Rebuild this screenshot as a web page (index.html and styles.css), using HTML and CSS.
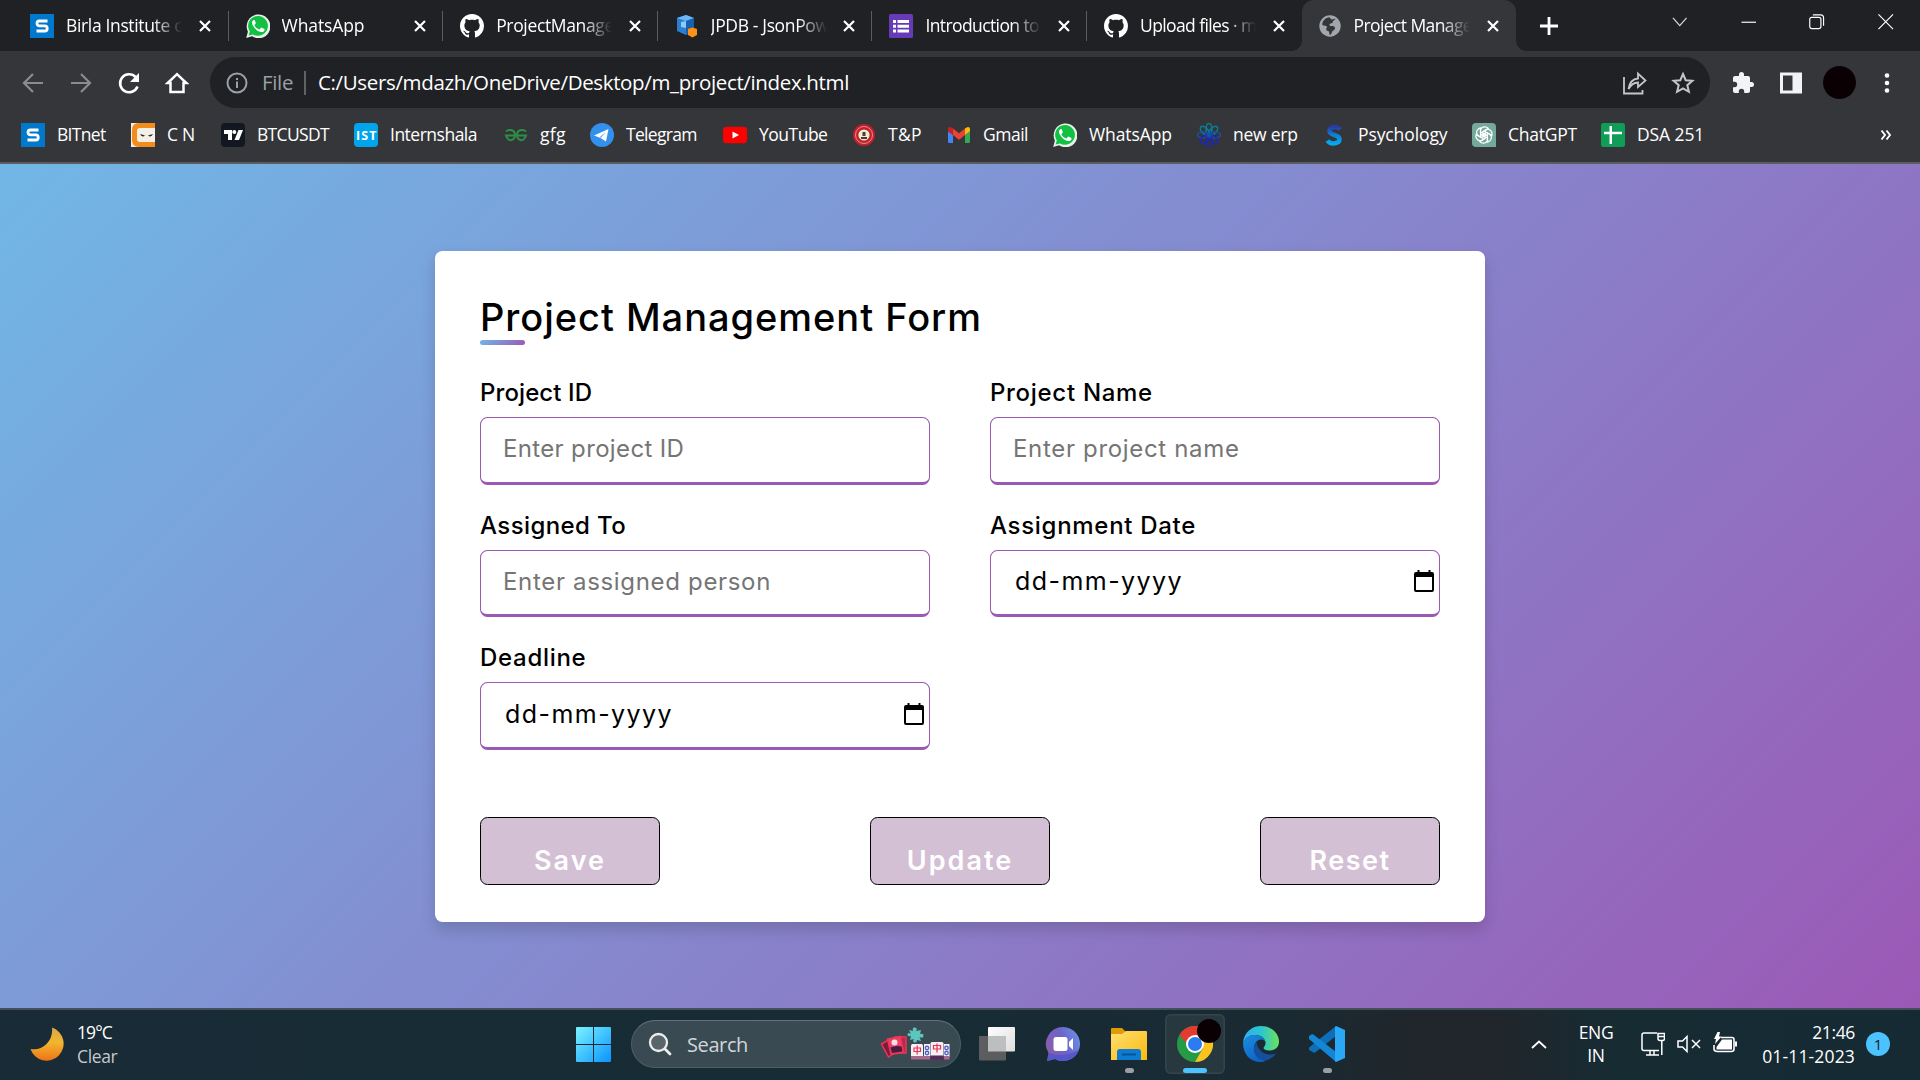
FILE: index.html
```html
<!DOCTYPE html>
<html lang="en">
<head>
<meta charset="utf-8">
<title>Project Management Form</title>
<link rel="stylesheet" href="styles.css">
</head>
<body>
<svg class="defs" aria-hidden="true">
  <defs>
    <symbol id="close" viewBox="0 0 12 12"><path d="M1 1l10 10M11 1L1 11" stroke="#fff" stroke-width="2.2" fill="none"/></symbol>
    <symbol id="bit" viewBox="0 0 24 24"><path fill="#0079cc" d="M0 0h24v24H0z"/><path d="M17.5 7H9.2Q7 7 7 9.3T9.2 11.8h5.6q2.4 0 2.4 2.6T14.8 17H6.5" fill="none" stroke="#fff" stroke-width="2.8"/></symbol>
    <symbol id="github" viewBox="0 0 16 16"><path fill="#fff" d="M8 0C3.58 0 0 3.58 0 8c0 3.54 2.29 6.53 5.47 7.59.4.07.55-.17.55-.38 0-.19-.01-.82-.01-1.49-2.01.37-2.53-.49-2.69-.94-.09-.23-.48-.94-.82-1.13-.28-.15-.68-.52-.01-.53.63-.01 1.08.58 1.23.82.72 1.21 1.87.87 2.33.66.07-.52.28-.87.51-1.07-1.78-.2-3.64-.89-3.64-3.95 0-.87.31-1.59.82-2.15-.08-.2-.36-1.02.08-2.12 0 0 .67-.21 2.2.82.64-.18 1.32-.27 2-.27s1.36.09 2 .27c1.53-1.04 2.2-.82 2.2-.82.44 1.1.16 1.92.08 2.12.51.56.82 1.27.82 2.15 0 3.07-1.87 3.75-3.65 3.95.29.25.54.73.54 1.48 0 1.07-.01 1.93-.01 2.2 0 .21.15.46.55.38A8.01 8.01 0 0 0 16 8c0-4.42-3.58-8-8-8z"/></symbol>
    <symbol id="whatsapp" viewBox="0 0 24 24"><path fill="#e8f2ea" d="M.2 24l1.7-6.3A11.9 11.9 0 1 1 6 22.3z"/><path fill="#12c143" d="M2.6 21.5l1.2-4.1A9.9 9.9 0 1 1 7 20.4z"/><path fill="#fff" d="M8.9 6.6c-.3-.6-.5-.6-1-.6-.7 0-1.900.9-1.900 2.700 0 1.700 1.300 3.500 1.500 3.800s2.600 4.100 6.400 5.300c3 1 4.300-.7 4.500-1.300.2-.7.2-1.300 0-1.500l-2.700-1.300c-.3-.1-.6-.2-.9.200l-1.100 1.400c-.3.300-.5.200-.9 0-2.200-1-3.300-2.100-4.300-3.800-.2-.4 0-.6.200-.8l1-1.300c.1-.3.100-.4 0-.7z"/></symbol>
    <symbol id="calendar" viewBox="0 0 20 22"><path fill-rule="evenodd" d="M3.500 0h2v2h9V0h2v2H18q2 0 2 2v16q0 2-2 2H2q-2 0-2-2V4q0-2 2-2h1.500zM2 7v13h16V7z"/></symbol>
  </defs>
</svg>

<header class="browser">
  <div class="tabstrip">
    <div class="tab first"><svg class="fav"><use href="#bit"/></svg><span class="tab-title">Birla Institute of</span><svg class="x"><use href="#close"/></svg></div>
    <div class="tab"><svg class="fav"><use href="#whatsapp"/></svg><span class="tab-title whole">WhatsApp</span><svg class="x"><use href="#close"/></svg></div>
    <div class="tab"><svg class="fav"><use href="#github"/></svg><span class="tab-title">ProjectManage</span><svg class="x"><use href="#close"/></svg></div>
    <div class="tab"><svg class="fav" viewBox="0 0 24 24"><path fill="#2b7fd0" d="M2 4l9-3 8 3v13l-8 4-9-4z"/><path fill="#69b7f5" d="M2 4l9-3 8 3-8 3z"/><path fill="#1a5fae" d="M11 7l8-3v13l-8 4z"/><path fill="#8cc9fa" d="M6 8l5-1v7l-5-1z"/><path fill="#ff9114" d="M13 15l4.500-1.500L22 15v6l-4.500 2.500L13 21z"/></svg><span class="tab-title">JPDB - JsonPow</span><svg class="x"><use href="#close"/></svg></div>
    <div class="tab"><svg class="fav" viewBox="0 0 24 24"><rect width="24" height="24" rx="1.500" fill="#673ab7"/><path fill="#fff" d="M4 6h3v3H4zm4.500 0H20v3H8.500zM4 10.700h3v3H4zm4.500 0H20v3H8.500zM4 15.400h3v3H4zm4.500 0H20v3H8.500z"/></svg><span class="tab-title tight">Introduction to</span><svg class="x"><use href="#close"/></svg></div>
    <div class="tab last"><svg class="fav"><use href="#github"/></svg><span class="tab-title tight">Upload files · m</span><svg class="x"><use href="#close"/></svg></div>
    <div class="tab active"><svg class="fav" viewBox="0 0 24 24"><circle cx="12" cy="12" r="10.700" fill="#a2a7ad"/><path fill="#35363a" d="M11 3.200c1.800.3 1.300 2.200 3.300 2.300 1.200 0 2.200-.9 3.200-.6-1 1.300-2.600 1.500-2.700 3-.1 1.700-2.300 1-3.100 2-.8 1.200.300 2.100 1.700 2.100 2.300 0 3.800.5 3.600 2.600-.2 1.700-2.100 1.800-2.800 3-.6 1.200-.4 2.700-2.200 3.300-1.200-.6-.3-2.600-1.300-3.600-.8-.9-2.300-.5-2.500-1.900-.1-1.300 1-1.700.7-2.600-.5-1.200-2.800-.9-4.500-1.700C4 7.500 6.600 4 11 3.200z"/></svg><span class="tab-title tight">Project Manage</span><svg class="x"><use href="#close"/></svg></div>
    <svg class="plus" viewBox="0 0 18 18"><path d="M9 0v18M0 9h18" stroke="#fff" stroke-width="2.800"/></svg>
    <div class="winctl">
      <svg viewBox="0 0 18 18"><path d="M2 5l7 8 7-8" fill="none" stroke="#ddd" stroke-width="1.200"/></svg>
      <svg viewBox="0 0 18 18"><path d="M1.500 9.500h15" stroke="#fff" stroke-width="1.200"/></svg>
      <svg viewBox="0 0 18 18"><rect x="1.800" y="4.500" width="11.500" height="11.500" rx="2" fill="none" stroke="#fff" stroke-width="1.200"/><path d="M5 2h8q3 0 3 3v8" fill="none" stroke="#fff" stroke-width="1.200"/></svg>
      <svg viewBox="0 0 18 18"><path d="M1.500 1.500l15 15m0-15l-15 15" stroke="#fff" stroke-width="1.200"/></svg>
    </div>
  </div>

  <div class="toolbar">
    <div class="nav">
      <svg viewBox="0 0 24 24"><path d="M22 12H3M12 3l-9 9 9 9" fill="none" stroke="#8b8c8f" stroke-width="2.200"/></svg>
      <svg viewBox="0 0 24 24"><path d="M2 12h19M12 3l9 9-9 9" fill="none" stroke="#8b8c8f" stroke-width="2.200"/></svg>
      <svg viewBox="0 0 24 24"><path d="M20.500 15.500A9 9 0 1 1 18.600 6" fill="none" stroke="#fff" stroke-width="2.600"/><path d="M22 2v9h-9z" fill="#fff"/></svg>
      <svg viewBox="0 0 24 24"><path d="M5.500 21V12H2.700L12 3.200l9.300 8.800h-2.800v9z" fill="none" stroke="#fff" stroke-width="2.500"/></svg>
    </div>
    <div class="omnibox">
      <svg class="info" viewBox="0 0 24 24"><circle cx="12" cy="12" r="9.500" fill="none" stroke="#9aa0a6" stroke-width="2"/><path d="M11 10.500h2V17h-2zM11 7h2v2.100h-2z" fill="#9aa0a6"/></svg>
      <span class="scheme">File</span><i class="bar"></i>
      <span class="url">C:/Users/mdazh/OneDrive/Desktop/m_project/index.html</span>
      <svg class="share" viewBox="0 0 24 24"><path d="M1 6v16.500h18.500V19" fill="none" stroke="#c4c6c9" stroke-width="1.800"/><path d="M5.500 18C6.500 11.500 9.500 8 15 7.500V2.500L22.500 9.500 15 16v-4.500c-4 0-7 2-9.500 6.500z" fill="none" stroke="#c4c6c9" stroke-width="1.800"/></svg>
      <svg viewBox="0 0 24 24"><path d="M12 3l2.700 6.200 6.700.6-5.100 4.400 1.600 6.600L12 17.300l-5.900 3.500 1.600-6.600-5.100-4.400 6.700-.6z" fill="none" stroke="#c4c6c9" stroke-width="2"/></svg>
    </div>
    <div class="actions">
      <svg viewBox="0 0 24 24"><path fill="#f1f3f4" d="M20.500 11H19V7c0-1.100-.9-2-2-2h-4V3.500a2.500 2.500 0 0 0-5 0V5H4c-1.100 0-2 .9-2 2v3.800h1.500a2.700 2.700 0 0 1 0 5.400H2V20c0 1.100.9 2 2 2h3.800v-1.500a2.700 2.700 0 0 1 5.400 0V22H17c1.100 0 2-.9 2-2v-4h1.500a2.500 2.500 0 0 0 0-5z"/></svg>
      <svg viewBox="0 0 24 24"><path fill="#f1f3f4" fill-rule="evenodd" d="M1 1.500h22v21H1zM4 4.500v15h9.500v-15z"/></svg>
      <i class="avatar"></i>
      <svg viewBox="0 0 24 24"><g fill="#fff"><circle cx="12" cy="4.500" r="2.300"/><circle cx="12" cy="12" r="2.300"/><circle cx="12" cy="19.500" r="2.300"/></g></svg>
    </div>
  </div>

  <nav class="bookmarks">
    <a><svg><use href="#bit"/></svg><span>BITnet</span></a>
    <a><svg viewBox="0 0 24 24"><path fill="#f6efe6" d="M0 0h24v24H0z"/><path fill="#f28c1c" d="M24 0v5H9q-3 0-3 3v8q0 3 3 3h15v5H8q-7 0-7-7V7q0-7 7-7z"/><path fill="#222" d="M9 11l5 1.500q-3 2.500-5-1.500zm13 0l-5 1.500q3 2.500 5-1.500z"/></svg><span>C N</span></a>
    <a><svg viewBox="0 0 24 24"><rect width="24" height="24" rx="4" fill="#131722"/><path fill="#fff" d="M3 7h8v10H7v-6H3z"/><circle cx="13.300" cy="9" r="2" fill="#fff"/><path fill="#fff" d="M17.500 7H22l-4 10h-4.500z"/></svg><span>BTCUSDT</span></a>
    <a><svg viewBox="0 0 24 24"><rect width="24" height="24" rx="4" fill="#00a5ec"/><text x="12" y="16.500" text-anchor="middle" font-family="Open Sans, sans-serif" font-size="12.500" font-weight="700" fill="#fff" textLength="20">IST</text></svg><span>Internshala</span></a>
    <a><svg viewBox="0 0 24 24"><path d="M2 8.500q2-2 5-1.500 4 1 4 5t-3.500 5T2 12.500h9M22 8.500q-2-2-5-1.500-4 1-4 5t3.500 5 5.500-4.500h-9" fill="none" stroke="#2f8d46" stroke-width="2"/></svg><span>gfg</span></a>
    <a><svg viewBox="0 0 24 24"><circle cx="12" cy="12" r="12" fill="#3390ec"/><path fill="#fff" d="M4 12.500L18.500 6 16 18.500l-5.500-3.500z"/><path fill="#3390ec" d="M9.500 14.500L16 8.500l-5 6z"/></svg><span>Telegram</span></a>
    <a><svg viewBox="0 0 24 24"><rect y="3.700" width="24" height="16.600" rx="3.500" fill="#f00"/><path fill="#fff" d="M9.500 8.400v7.200L16 12z"/></svg><span>YouTube</span></a>
    <a><svg viewBox="0 0 24 24"><circle cx="12" cy="12" r="11" fill="#c21f2b"/><circle cx="12" cy="12" r="8.500" fill="none" stroke="#e38d92" stroke-width="1"/><circle cx="12" cy="12" r="5.600" fill="#f3ead5"/><path fill="#4c3c2a" d="M9 14h6v2H9zm1.500-5h3v4h-3z"/></svg><span>T&amp;P</span></a>
    <a><svg viewBox="0 0 24 24"><path fill="#4285f4" d="M1 8l5 4v8H2.500Q1 20 1 18.500z"/><path fill="#34a853" d="M23 8l-5 4v8h3.500q1.500 0 1.500-1.500z"/><path fill="#ea4335" d="M6 5.500l6 4.700 6-4.700V12l-6 4.700L6 12z"/><path fill="#c5221f" d="M1 6q0-2 2-2 1.200 0 3 1.500V12L1 8.200z"/><path fill="#fbbc04" d="M23 6q0-2-2-2-1.200 0-3 1.500V12l5-3.800z"/></svg><span>Gmail</span></a>
    <a><svg><use href="#whatsapp"/></svg><span>WhatsApp</span></a>
    <a><svg viewBox="0 0 24 24"><g fill="none" stroke-width="1.600"><g stroke="#087d93"><ellipse cx="12" cy="6" rx="3" ry="5.500"/><ellipse cx="12" cy="6" rx="3" ry="5.500" transform="rotate(45 12 12)"/><ellipse cx="12" cy="6" rx="3" ry="5.500" transform="rotate(-45 12 12)"/></g><g stroke="#1a4fa8"><ellipse cx="12" cy="6" rx="3" ry="5.500" transform="rotate(90 12 12)"/><ellipse cx="12" cy="6" rx="3" ry="5.500" transform="rotate(-90 12 12)"/></g><g stroke="#1d27b5"><ellipse cx="12" cy="6" rx="3" ry="5.500" transform="rotate(135 12 12)"/><ellipse cx="12" cy="6" rx="3" ry="5.500" transform="rotate(180 12 12)"/><ellipse cx="12" cy="6" rx="3" ry="5.500" transform="rotate(225 12 12)"/></g></g><circle cx="12" cy="12" r="2.500" fill="#1a4fa8"/></svg><span>new erp</span></a>
    <a><svg viewBox="0 0 24 24"><defs><linearGradient id="psy" x2="0" y2="1"><stop stop-color="#2b3aa5"/><stop offset=".5" stop-color="#0b82d8"/><stop offset="1" stop-color="#04a9ef"/></linearGradient></defs><path d="M18 6.500Q16.500 4 13 4 7.500 4 7.500 8c0 5 10 3 10 8 0 5-9 6-12 1.500" fill="none" stroke="url(#psy)" stroke-width="4.500"/></svg><span>Psychology</span></a>
    <a><svg viewBox="0 0 24 24"><path fill="#75a99c" d="M4 0h16q4 0 4 4v20H4q-4 0-4-4V4q0-4 4-4z"/><g fill="none" stroke="#fff" stroke-width="1.200"><path id="lobe" d="M8.600 14V7.500Q9 3.800 12.800 3.800q2 0 3.500 1.500L11 8.600v5.600"/><use href="#lobe" transform="rotate(60 12 12)"/><use href="#lobe" transform="rotate(120 12 12)"/><use href="#lobe" transform="rotate(180 12 12)"/><use href="#lobe" transform="rotate(240 12 12)"/><use href="#lobe" transform="rotate(300 12 12)"/></g></svg><span>ChatGPT</span></a>
    <a><svg viewBox="0 0 24 24"><rect width="24" height="24" rx="2.500" fill="#0f9d58"/><path fill="#fff" d="M8.500 3H11v5.700h10v2.600H11V21H8.500v-9.700H3V8.700h5.500z"/></svg><span>DSA 251</span></a>
    <svg class="more" viewBox="0 0 12 12"><path d="M1.500 1.500L5 6l-3.500 4.500M6.500 1.500L10 6l-3.500 4.500" fill="none" stroke="#fff" stroke-width="1.900"/></svg>
  </nav>
</header>

<main class="page">
  <form class="card">
    <h1 class="title">Project Management Form</h1>
    <div class="fields">
      <label class="field"><span class="lbl id">Project ID</span><span class="input hint snug">Enter project ID</span></label>
      <label class="field"><span class="lbl">Project Name</span><span class="input hint">Enter project name</span></label>
      <label class="field"><span class="lbl to">Assigned To</span><span class="input hint">Enter assigned person</span></label>
      <label class="field"><span class="lbl">Assignment Date</span><span class="input date"><span>dd-mm-yyyy</span><svg><use href="#calendar"/></svg></span></label>
      <label class="field"><span class="lbl">Deadline</span><span class="input date"><span>dd-mm-yyyy</span><svg><use href="#calendar"/></svg></span></label>
    </div>
    <div class="buttons">
      <button type="button">Save</button>
      <button type="button">Update</button>
      <button type="button">Reset</button>
    </div>
  </form>
</main>

<footer class="taskbar">
  <div class="weather">
    <svg viewBox="0 0 34 34"><defs><linearGradient id="moon" x2="0" y2="1"><stop stop-color="#d9a648"/><stop offset=".45" stop-color="#f1b62f"/><stop offset="1" stop-color="#ee7417"/></linearGradient></defs><path fill="url(#moon)" d="M22 .5A17 17 0 1 1 .5 22Q10 23.500 16.500 17T22 .5z"/></svg>
    <div class="two"><span class="temp">19°C</span><span class="dim">Clear</span></div>
  </div>
  <div class="dock">
    <svg class="start" viewBox="0 0 35 35"><defs><linearGradient id="win" gradientUnits="userSpaceOnUse" x1="0" y1="0" x2="35" y2="35"><stop stop-color="#7af3ff"/><stop offset="1" stop-color="#0a93ff"/></linearGradient></defs><path fill="url(#win)" d="M1 0h16v17H0V1q0-1 1-1zm17 0h16q1 0 1 1v16H18zM0 18h17v17H1q-1 0-1-1zm18 0h17v16q0 1-1 1H18z"/></svg>
    <div class="search">
      <svg class="mag" viewBox="0 0 24 24"><circle cx="10.500" cy="10.500" r="8.500" fill="#59656b" stroke="#eee" stroke-width="2.300"/><path d="M17 17l5 5" stroke="#eee" stroke-width="2.800" stroke-linecap="round"/></svg>
      <span>Search</span>
      <svg class="games" viewBox="0 0 72 34"><g stroke="#f03354" stroke-width="1.500"><path fill="#7a1c3c" d="M1.500 17l7-4 6 13-6 4z"/><path fill="#b62a4d" d="M15 10h11v16H15z"/><path fill="#e8416a" d="M7.500 12l13-2.500 3 16-12.500 2z"/></g><circle cx="14.500" cy="15.500" r="3" fill="#fbdde4"/><path fill="#4b1a3e" d="M10.500 20.500q5-2.500 11-1l1 5-10.500 1.500z"/><g transform="translate(0 -2)"><path fill="#5cc6bd" d="M29 5l4 1q-1-4 2-3.500t1 3.500l5-1-1 4q4-1 3.500 2t-4 1l1.500 4-4-1q0 3-2.500 2.500T34 14l-4 1 1-4q-4 1-3.500-1.500T31 9z"/></g><g fill="#f4f0f3"><rect x="31" y="17" width="12" height="13" rx="1.500"/><rect x="44" y="17" width="6" height="13"/><rect x="50.500" y="15" width="13" height="15" rx="1.500"/><rect x="64" y="17" width="5.500" height="13"/></g><path fill="#a86a8c" d="M31 29h19v3.500H31zm33 0h5.500v3.500H64z"/><path fill="#58275c" d="M50.500 28.500h13v4h-13z"/><path d="M34 21h6.500v3.500H34zM37.200 18.500v9M53.500 18.500h7V22h-7zM57 16.500v9" fill="none" stroke="#ee3156" stroke-width="1.200"/><g fill="none" stroke="#5262c8" stroke-width="1.400"><circle cx="47" cy="21" r="1.700"/><circle cx="47" cy="26" r="1.700"/><circle cx="66.500" cy="21" r="1.700"/><circle cx="66.500" cy="26" r="1.700"/></g></svg>
    </div>
    <div class="app"><svg viewBox="0 0 36 36"><defs><linearGradient id="tv" x2="1" y2="1"><stop stop-color="#fff"/><stop offset="1" stop-color="#ddd"/></linearGradient></defs><rect x="9" y="1" width="27" height="24.500" rx="1" fill="url(#tv)"/><rect y="10" width="27" height="24.500" rx="1" fill="#5b5d5f"/><path fill="#bdbebf" d="M9 10h18v15.500H9z"/></svg></div>
    <div class="app"><svg viewBox="0 0 36 36"><defs><linearGradient id="chat" x1="0" x2="1" y1=".6" y2=".2"><stop stop-color="#8a5da9"/><stop offset=".5" stop-color="#6d63c8"/><stop offset="1" stop-color="#6a92e8"/></linearGradient></defs><path fill="url(#chat)" d="M18 1a17 17 0 1 1-8 32l-8 2 1.500-8A17 17 0 0 1 18 1z"/><path fill="#5757c9" d="M4 27q14 5 30-3a17 17 0 0 1-24 9l-8 2z"/><rect x="8.500" y="11" width="14" height="14" rx="2.500" fill="#fff"/><path fill="#fff" d="M24 16l4-4v12l-4-4z"/></svg></div>
    <div class="app open"><svg viewBox="0 0 36 36"><defs><linearGradient id="fold" x2="1" y2="1"><stop stop-color="#ffdf72"/><stop offset="1" stop-color="#fbb90f"/></linearGradient></defs><path fill="#dd9b05" d="M1 2h10l4 4v4H0V3q0-1 1-1z"/><path fill="url(#fold)" d="M0 8h11l4-3h20q1 0 1 1v28H0z"/><path fill="#0c7bd0" d="M6 34V26q0-3 3-3h18q3 0 3 3v8z"/><path d="M11 28.500h14" stroke="#0b4f92" stroke-width="1.800"/></svg></div>
    <div class="app current"><svg viewBox="0 0 36 36"><circle cx="18" cy="18" r="18" fill="#269a46"/><path fill="#e33b2e" d="M18 18h-7.800L2.400 9A18 18 0 0 1 33.600 9H18z"/><path fill="#fcc31e" d="M18 9h15.600A18 18 0 0 1 18 36l7.800-13.500z"/><circle cx="18" cy="18" r="9" fill="#fff"/><circle cx="18" cy="18" r="7" fill="#2a7cf0"/></svg><i class="mark"></i></div>
    <div class="app"><svg viewBox="0 0 36 36"><defs><linearGradient id="e1" x2="1"><stop stop-color="#35aef0"/><stop offset=".5" stop-color="#2bc5cf"/><stop offset="1" stop-color="#6be25a"/></linearGradient><linearGradient id="e2" x2=".6" y2="1"><stop stop-color="#1a8fe0"/><stop offset="1" stop-color="#0d63c4"/></linearGradient></defs><path fill="url(#e1)" d="M0 17C1 6 9 0 18 0c11 0 18 8 18 15.500 0 6-4 9-9.500 9-4 0-6-1.500-6-2.500s2-2 2-5c0-4-4-8-10-8C6 9 2 12 0 17z"/><path fill="url(#e2)" d="M0 17c2-6 7-8 12-8 6 0 10.500 4 10.500 8 0-2-2-3.500-4.500-3.500-4 0-7 4-7 9 0 7 6 12 12 12Q20 36 18 36C7 36 0 28 0 17z"/><path fill="#134f9c" d="M13.500 16q-3.500 4-2.500 9c1 5 6 9.500 12 9.500 4-1 8-4 10-7-9 3-18-1-19.500-11.500z"/></svg></div>
    <div class="app open"><svg viewBox="0 0 36 36"><path fill="#0d6fb8" d="M27 0v10L5.500 27 0 24q-1-1 0-2.500z"/><path fill="#1287d6" d="M0 13q-1-2 0-3l2.500-1.500q1.500-.5 2.500.5L27 26v10z"/><path fill="#2aa7f5" d="M27 0l9 4v28l-9 4-1-1V1z"/></svg></div>
  </div>
  <div class="tray">
    <svg class="caret" viewBox="0 0 16 9"><path d="M1 8l7-6.500L15 8" fill="none" stroke="#fff" stroke-width="1.800"/></svg>
    <div class="two lang"><span>ENG</span><span>IN</span></div>
    <svg class="net" viewBox="0 0 24 24"><path d="M16 1H3Q1 1 1 3v13.500q0 2 2 2h15M9 18.500v4M13 18.500v4M5 23h13M17 1.500h6.500v5q0 2-2 2H19q-2 0-2-2zM17 4.500h6.500M20.800 8.500V23" fill="none" stroke="#fff" stroke-width="1.500"/></svg>
    <svg class="vol" viewBox="0 0 24 24"><path d="M1 9h4.500L10 4.500v15L5.500 15H1zM15 8l8 8M23 8l-8 8" fill="none" stroke="#fff" stroke-width="1.500"/></svg>
    <svg class="bat" viewBox="0 0 24 24"><path d="M8 5.500h11q2 0 2 2v9.500q0 2.500-2.500 2.500h-14Q1 19.500 1 17v-4" fill="none" stroke="#fff" stroke-width="1.600"/><path fill="#fff" d="M9 7.500h10v10H3.500V15zM22 9.500h2v5h-2zM4.500 0H7L6 4.500h2.500L2 12l1-5H1z"/></svg>
    <div class="two clock"><span>21:46</span><span class="day">01-11-2023</span></div>
    <span class="count">1</span>
  </div>
</footer>
</body>
</html>
```
FILE: styles.css
```css
* { box-sizing: border-box; }

body {
  margin: 0;
  width: 1920px;
  height: 1080px;
  overflow: hidden;
  display: flex;
  flex-direction: column;
  font-family: "Open Sans", "Noto Sans", sans-serif;
  font-size: 17.5px;
  color: #fff;
}

svg { display: block; flex: none; }
.defs { position: absolute; width: 0; height: 0; }

/* Browser chrome */
.browser {
  height: 164px;
  flex: none;
  background: #35363a;
  border-bottom: 2px solid #5b5c60;
}

.tabstrip {
  display: flex;
  align-items: center;
  height: 51px;
  padding-left: 14px;
  background: #202124;
}

.tab {
  display: flex;
  align-items: center;
  flex: none;
  width: 214.6px;
  height: 30px;
  padding: 0 16px 0 17px;
  border-right: 1.5px solid #5a5c60;
}
.tab.first { padding: 0 17px 0 16px; }
.tab.last { border-right-color: transparent; }
.tab.active {
  position: relative;
  height: 51px;
  padding: 0 17px 0 16px;
  border: 0;
  border-radius: 12px 12px 0 0;
  background: #35363a;
}
.tab.active::before,
.tab.active::after {
  content: "";
  position: absolute;
  bottom: 0;
  width: 10px;
  height: 10px;
}
.tab.active::before { left: -10px; background: radial-gradient(circle at 0 0, transparent 9.5px, #35363a 10px); }
.tab.active::after { right: -10px; background: radial-gradient(circle at 100% 0, transparent 9.5px, #35363a 10px); }

.fav { width: 24px; height: 24px; }
.tab-title {
  width: 116px;
  height: 26px;
  margin: -2px 0 0 12px;
  overflow: hidden;
  white-space: nowrap;
  line-height: 26px;
  letter-spacing: -.35px;
  -webkit-mask-image: linear-gradient(90deg, #000 75%, transparent);
  mask-image: linear-gradient(90deg, #000 75%, transparent);
}
.tab-title.whole { letter-spacing: -.1px; }
.tab-title.tight { letter-spacing: -.6px; }
.x { width: 12px; height: 12px; margin-left: auto; }
.plus { width: 18px; height: 18px; margin-left: 24px; }
.winctl { display: flex; gap: 51px; margin: -8px 26px 0 auto; }
.winctl svg { width: 17.5px; height: 17.5px; }

.toolbar { display: flex; align-items: center; height: 63px; }
.nav { display: flex; gap: 24px; width: 210px; padding-left: 21px; }
.nav svg { width: 24px; height: 24px; }

.omnibox {
  display: flex;
  align-items: center;
  width: 1500px;
  height: 51px;
  border-radius: 26px;
  padding: 0 15px;
  background: #202124;
  font-size: 20.5px;
  letter-spacing: -.35px;
}
.omnibox svg { width: 24px; height: 24px; }
.scheme, .url { padding-bottom: 2px; }
.scheme { margin-left: 13px; width: 42px; color: #9aa0a6; }
.bar { width: 2px; height: 24px; margin-right: 12px; background: #5f6368; }
.omnibox .share { margin: 0 24px 0 auto; }

.actions { display: flex; align-items: center; gap: 24px; padding-left: 21px; }
.actions svg { width: 24px; height: 24px; }
.avatar { width: 33px; height: 33px; margin: 0 -4.5px; border-radius: 50%; background: #0a0004; }

.bookmarks {
  display: grid;
  grid-template-columns: 110px 90px 133px 150px 86px 133px 129px 95px 106px 144px 125px 150px 129px 1fr 12px;
  align-items: center;
  height: 42px;
  padding: 0 28px 0 21px;
}
.bookmarks a { display: flex; align-items: center; gap: 12px; white-space: nowrap; letter-spacing: -.5px; }
.bookmarks span { padding-bottom: 2px; }
.bookmarks a:nth-child(1), .bookmarks a:nth-child(3), .bookmarks a:nth-child(6) { letter-spacing: -.68px; }
.bookmarks a:nth-child(5), .bookmarks a:nth-child(8) { letter-spacing: .3px; }
.bookmarks a:nth-child(2), .bookmarks a:nth-child(11), .bookmarks a:nth-child(13) { letter-spacing: -.25px; }
.bookmarks a:nth-child(10), .bookmarks a:nth-child(12), .bookmarks a:nth-child(14) { letter-spacing: -.1px; }
.bookmarks a svg { width: 24px; height: 24px; }
.more { width: 12px; height: 12px; }

/* Form page */
.page {
  flex: 1;
  display: flex;
  justify-content: center;
  align-items: flex-start;
  padding-top: 87px;
  background: linear-gradient(135deg, #71b7e6, #9b59b6);
}
.card {
  width: 1050px;
  height: 671px;
  padding: 38px 45px;
  border-radius: 7.5px;
  background: #fff;
  color: #000;
  font-family: Inter, "Open Sans", sans-serif;
  box-shadow: 0 7.5px 15px rgba(0, 0, 0, .15);
}
.title {
  margin: 0;
  height: 56px;
  line-height: 56px;
  font-size: 38px;
  font-weight: 500;
  letter-spacing: .97px;
}
.title::after {
  content: "";
  display: block;
  width: 45px;
  height: 5px;
  margin-top: -5px;
  border-radius: 3px;
  background: linear-gradient(135deg, #71b7e6, #9b59b6);
}
.fields {
  display: grid;
  grid-template-columns: 450px 450px;
  column-gap: 60px;
  grid-auto-rows: 132.6px;
  padding-top: 28px;
}
.field { display: flex; flex-direction: column; }
.lbl {
  height: 44px;
  line-height: 39px;
  font-size: 24px;
  font-weight: 500;
  letter-spacing: .7px;
}
.lbl.id { letter-spacing: .1px; }
.lbl.to { letter-spacing: .4px; }
.input {
  display: flex;
  align-items: center;
  justify-content: space-between;
  height: 67.5px;
  padding: 0 5px 2px 22px;
  border: 1px solid #9b59b6;
  border-bottom-width: 3px;
  border-radius: 7.5px;
  font-size: 24px;
  letter-spacing: .67px;
}
.hint { color: #757575; }
.snug { letter-spacing: .35px; }
.date { padding-left: 24px; font-size: 25px; letter-spacing: 1.45px; }
.date svg { width: 20px; height: 22px; }
.buttons { display: flex; justify-content: space-between; margin-top: 46px; }
.buttons button {
  width: 180px;
  height: 68px;
  padding: 19px 0 0;
  border: 1px solid #000;
  border-radius: 7.5px;
  background: #d4c0d5;
  color: #fff;
  font: 600 27px Inter, "Open Sans", sans-serif;
  letter-spacing: 2px;
}
.buttons button:last-child { letter-spacing: 1.5px; }

/* Taskbar */
.taskbar {
  display: flex;
  align-items: center;
  height: 72px;
  flex: none;
  padding-bottom: 2px;
  border-top: 2px solid #43505a;
  background: linear-gradient(90deg, #182b36 0%, #172c35 45%, #192a33 66%, #20262b 74%, #20262b 78%, #172b33 84%, #152a33 100%);
}
.two { display: flex; flex-direction: column; margin-top: -1px; line-height: 24px; letter-spacing: -.35px; }
.temp { letter-spacing: -.9px; }
.dim { color: #c4c9cc; }
.weather { display: flex; align-items: center; gap: 13px; width: 576px; padding-left: 30px; }
.weather svg { width: 34px; height: 34px; }
.dock { display: flex; align-items: center; }
.start { width: 35px; height: 35px; margin-right: 20px; }
.search {
  display: flex;
  align-items: center;
  width: 330px;
  height: 48px;
  padding: 0 8px 0 16px;
  border: 1.5px solid #4f5e65;
  border-top-color: #627077;
  border-radius: 24px;
  background: #394a52;
  color: #d2d6d8;
  font-size: 20px;
  letter-spacing: -.4px;
}
.mag { width: 24px; height: 24px; margin-right: 15px; }
.games { width: 72px; height: 34px; margin-left: auto; }
.app {
  position: relative;
  display: grid;
  place-items: center;
  width: 60px;
  height: 60px;
  margin-left: 6px;
  border-radius: 6px;
}
.app svg { width: 36px; height: 36px; }
.app.current { background: #28383f; box-shadow: inset 0 0 0 1.5px #34444b; }
.app.open::after,
.app.current::after {
  content: "";
  position: absolute;
  left: 50%;
  bottom: 1px;
  width: 9px;
  height: 5px;
  margin-left: -4.5px;
  border-radius: 3px;
  background: #9a9fa3;
}
.app.current::after { width: 24px; margin-left: -12px; background: #4cc2ff; }
.mark { position: absolute; top: 5px; left: 32px; width: 24px; height: 24px; border-radius: 50%; background: #0a0004; }
.tray { display: flex; align-items: center; margin-left: auto; padding-right: 30px; }
.caret { width: 16px; height: 9px; margin-right: 27px; }
.lang { width: 44px; margin-right: 23px; align-items: center; line-height: 23px; }
.net, .vol, .bat { width: 24px; height: 24px; margin-right: 12px; }
.clock { width: 106px; align-items: flex-end; }
.day { letter-spacing: .15px; }
.count {
  width: 24px;
  height: 24px;
  margin-left: 11px;
  border-radius: 50%;
  background: #4cc2ff;
  color: #10202a;
  font-size: 15px;
  line-height: 24px;
  text-align: center;
}
```
